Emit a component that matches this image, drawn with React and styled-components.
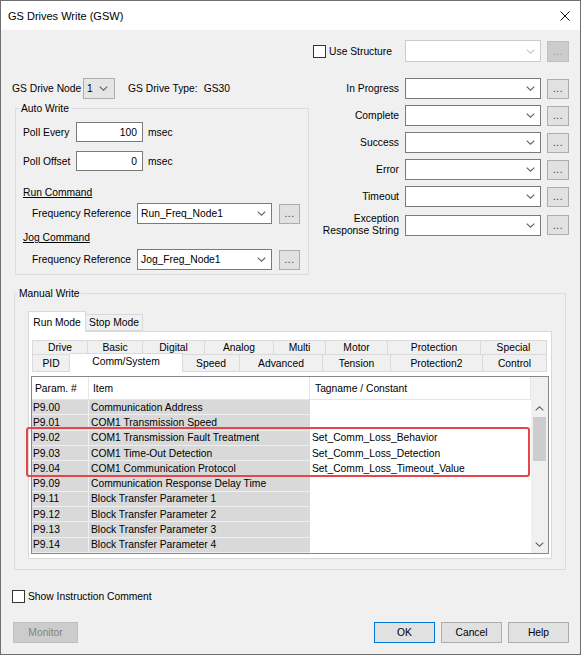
import React from 'react';
import styled, { createGlobalStyle, css } from 'styled-components';

const GlobalStyle = createGlobalStyle`
  html, body {
    margin: 0;
    padding: 0;
    background: #ffffff;
  }
  body {
    font-family: "Liberation Sans", Arial, sans-serif;
    font-size: 10.3px;
    color: #000;
  }
  * {
    box-sizing: border-box;
  }
`;

const rows = [
  { param: 'P9.00', item: 'Communication Address', tag: '' },
  { param: 'P9.01', item: 'COM1 Transmission Speed', tag: '' },
  { param: 'P9.02', item: 'COM1 Transmission Fault Treatment', tag: 'Set_Comm_Loss_Behavior' },
  { param: 'P9.03', item: 'COM1 Time-Out Detection', tag: 'Set_Comm_Loss_Detection' },
  { param: 'P9.04', item: 'COM1 Communication Protocol', tag: 'Set_Comm_Loss_Timeout_Value' },
  { param: 'P9.09', item: 'Communication Response Delay Time', tag: '' },
  { param: 'P9.11', item: 'Block Transfer Parameter 1', tag: '' },
  { param: 'P9.12', item: 'Block Transfer Parameter 2', tag: '' },
  { param: 'P9.13', item: 'Block Transfer Parameter 3', tag: '' },
  { param: 'P9.14', item: 'Block Transfer Parameter 4', tag: '' },
];

const topTabs = [
  ['Drive', 56], ['Basic', 55], ['Digital', 62], ['Analog', 69],
  ['Multi', 52], ['Motor', 62], ['Protection', 93], ['Special', 66],
];

const bottomTabs = [
  ['PID', 38], ['Comm/System', 113], ['Speed', 57], ['Advanced', 83],
  ['Tension', 68], ['Protection2', 92], ['Control', 64],
];

const statusRows = ['In Progress', 'Complete', 'Success', 'Error', 'Timeout'];

const Chevron = ({ up, color = '#606060' }) => (
  <svg width="9" height="5" viewBox="0 0 9 5">
    <path
      d={up ? 'M0.7 4.3 L4.5 0.8 L8.3 4.3' : 'M0.7 0.7 L4.5 4.2 L8.3 0.7'}
      fill="none"
      stroke={color}
      strokeWidth="1.1"
    />
  </svg>
);

const Window = styled.div`
  width: 581px;
  height: 655px;
  border: 1px solid #6f6f6f;
  background: #f0f0f0;
  display: flex;
  flex-direction: column;
  overflow: hidden;
`;

const TitleBar = styled.div`
  height: 29px;
  background: #fff;
  display: flex;
  align-items: center;
  justify-content: space-between;
  padding: 0 10px 0 7px;
  font-size: 11px;
`;

const Body = styled.div`
  flex: 1;
  display: flex;
  flex-direction: column;
  padding: 0 11px;
`;

const TopSection = styled.div`
  display: grid;
  grid-template-columns: 297px 1fr;
  column-gap: 1px;
  align-items: start;
`;

const LeftCol = styled.div`
  padding-top: 48px;
`;

const FieldRow = styled.div`
  display: flex;
  align-items: center;
  height: ${p => p.$h || 20}px;
  margin-top: ${p => p.$mt || 0}px;
  padding-left: ${p => p.$indent || 0}px;
`;

const Label = styled.span`
  width: ${p => (p.$w ? `${p.$w}px` : 'auto')};
  flex-shrink: 0;
  white-space: nowrap;
  margin-left: ${p => p.$ml || 0}px;
`;

const SectionLink = styled.span`
  text-decoration: underline;
  line-height: 13px;
`;

const Group = styled.fieldset`
  margin: ${p => p.$margin};
  padding: ${p => p.$padding};
  border: 1px solid #dcdcdc;
  min-width: 0;
`;

const GroupTitle = styled.legend`
  padding: 0 2px;
  margin-left: ${p => p.$ml}px;
  line-height: 13px;
`;

const TextInput = styled.div`
  width: 67px;
  height: 20px;
  background: #fff;
  border: 1px solid #7a7a7a;
  display: flex;
  align-items: center;
  justify-content: flex-end;
  padding-right: 5px;
`;

const ComboBox = styled.div`
  width: ${p => p.$w}px;
  height: ${p => p.$h || 21}px;
  flex-shrink: 0;
  background: ${p => (p.$flat ? '#e5e5e5' : '#fff')};
  border: 1px solid ${p => (p.$disabled ? '#cccccc' : p.$flat ? '#adadad' : '#7a7a7a')};
  display: flex;
  align-items: center;
  justify-content: space-between;
  padding: 0 ${p => (p.$flat ? 6 : 5)}px 0 3px;
  white-space: nowrap;
`;

const DotsButton = styled.div`
  width: ${p => p.$w || 22}px;
  height: ${p => p.$h || 20}px;
  flex-shrink: 0;
  margin-left: ${p => p.$ml || 0}px;
  background: ${p => (p.$disabled ? '#cccccc' : '#e1e1e1')};
  border: 1px solid ${p => (p.$disabled ? '#bfbfbf' : '#adadad')};
  color: ${p => (p.$disabled ? '#a0a0a0' : '#333')};
  display: flex;
  align-items: center;
  justify-content: center;
  font-size: 10px;
  letter-spacing: 0.5px;
`;

const Check = styled.span`
  width: 13px;
  height: 13px;
  flex-shrink: 0;
  background: #fff;
  border: 1px solid #333;
`;

const CheckLabel = styled.label`
  display: flex;
  align-items: center;
  gap: 3px;
  white-space: nowrap;
`;

const gridColumns = css`
  display: grid;
  grid-template-columns: 1fr 136px 22px;
  column-gap: 6px;
  align-items: center;
`;

const StructureRow = styled.div`
  ${gridColumns};
  height: 22px;
  margin-top: 10px;
  margin-bottom: 16px;

  ${CheckLabel} {
    justify-self: end;
    margin-right: 7px;
  }
`;

const StatusGrid = styled.div`
  ${gridColumns};
  row-gap: 6px;
`;

const StatusLabel = styled.span`
  text-align: right;
  line-height: 12px;
  white-space: nowrap;
`;

const TabStrip = styled.div`
  display: flex;
  align-items: flex-end;
  height: 20px;
`;

const PageTab = styled.div`
  width: ${p => p.$w}px;
  height: ${p => (p.$active ? 21 : 17)}px;
  margin-bottom: ${p => (p.$active ? -1 : 0)}px;
  margin-left: ${p => (p.$active ? 0 : -1)}px;
  background: ${p => (p.$active ? '#fff' : '#f0f0f0')};
  border: 1px solid #d9d9d9;
  border-bottom: ${p => (p.$active ? 'none' : '1px solid #d9d9d9')};
  display: flex;
  align-items: center;
  justify-content: center;
  position: relative;
  z-index: ${p => (p.$active ? 1 : 0)};
  &:first-child {
    margin-left: 0;
  }
`;

const TabPage = styled.div`
  background: #fff;
  border: 1px solid #d9d9d9;
  padding: 8px 2px 4px 2px;
`;

const InnerTabs = styled.div`
  margin: 0 2px 0 1px;
`;

const InnerTabRow = styled.div`
  display: flex;
  height: ${p => p.$h}px;
`;

const InnerTab = styled.div`
  width: ${p => p.$w}px;
  flex-shrink: 0;
  height: ${p => (p.$active ? p.$h + 2 : p.$h)}px;
  margin-top: ${p => (p.$active ? -2 : 0)}px;
  background: ${p => (p.$active ? '#fff' : '#f0f0f0')};
  border: 1px solid #dadada;
  border-top: ${p => (p.$lower && !p.$active ? 'none' : '1px solid #dadada')};
  border-left: ${p => (p.$first ? '1px solid #dadada' : 'none')};
  border-bottom: ${p => (p.$active ? 'none' : '1px solid #dadada')};
  display: flex;
  justify-content: center;
  align-items: ${p => (p.$active ? 'flex-start' : 'center')};
  padding-top: ${p => (p.$active ? 2 : 0)}px;
  position: relative;
  z-index: ${p => (p.$active ? 1 : 0)};
  white-space: nowrap;
`;

const Table = styled.div`
  position: relative;
  margin-top: 4px;
  height: 178px;
  border: 1px solid #828790;
  background: #fff;
  display: flex;
`;

const TableGrid = styled.div`
  flex: 1;
  display: grid;
  grid-template-columns: 57px 221px 1fr;
  grid-template-rows: 23px repeat(10, 1fr);
`;

const HeadCell = styled.div`
  display: flex;
  align-items: center;
  padding-left: ${p => p.$pad}px;
  border-right: 1px solid #e5e5e5;
  border-bottom: 1px solid #e5e5e5;
  white-space: nowrap;
`;

const Cell = styled.div`
  display: flex;
  align-items: center;
  padding-left: ${p => p.$pad}px;
  background: ${p => (p.$gray ? '#d9d9d9' : '#fff')};
  border-bottom: 1px solid ${p => (p.$gray ? '#efefef' : '#fff')};
  border-right: ${p => (p.$divider ? '1px solid #efefef' : 'none')};
  white-space: nowrap;
  overflow: hidden;
`;

const ScrollBar = styled.div`
  width: 17px;
  background: #f0f0f0;
  display: flex;
  flex-direction: column;
`;

const ScrollHead = styled.div`
  height: 23px;
`;

const ScrollArrow = styled.div`
  height: 17px;
  display: flex;
  align-items: center;
  justify-content: center;
`;

const ScrollTrack = styled.div`
  flex: 1;
`;

const ScrollThumb = styled.div`
  height: 44px;
  margin: 0 2px;
  background: #cdcdcd;
`;

const Highlight = styled.div`
  position: absolute;
  left: -6px;
  top: 50px;
  width: 504px;
  height: 50px;
  border: 2px solid #e8454a;
  border-radius: 3px;
  pointer-events: none;
`;

const CommentRow = styled.div`
  margin-top: 20px;
  height: 13px;
  display: flex;
  align-items: center;
`;

const ButtonRow = styled.div`
  margin-top: 19px;
  display: flex;
  align-items: center;
  gap: 6px;
`;

const DialogButton = styled.div`
  width: ${p => p.$w || 61}px;
  height: 21px;
  display: flex;
  align-items: center;
  justify-content: center;
  background: ${p => (p.$disabled ? '#cccccc' : '#e1e1e1')};
  border: 1px solid ${p => (p.$default ? '#0078d7' : p.$disabled ? '#bfbfbf' : '#adadad')};
  color: ${p => (p.$disabled ? '#838383' : '#000')};
  margin-left: ${p => p.$ml || 0};
`;

const Spacer = styled.span`
  flex: 1;
`;

const App = () => {
  return (
    <>
      <GlobalStyle />
      <Window>
        <TitleBar>
          <span>GS Drives Write (GSW)</span>
          <svg width="10" height="10" viewBox="0 0 10 10">
            <path d="M0.5 0.5 L9.5 9.5 M9.5 0.5 L0.5 9.5" stroke="#111" strokeWidth="1" />
          </svg>
        </TitleBar>
        <Body>
          <TopSection>
            <LeftCol>
              <FieldRow $h={21}>
                <Label $w={71}>GS Drive Node</Label>
                <ComboBox $w={32} $flat>
                  <span>1</span>
                  <Chevron />
                </ComboBox>
                <Label $ml={13}>GS Drive Type:</Label>
                <Label $ml={6}>GS30</Label>
              </FieldRow>
              <Group $margin="3px 0 0 3px" $padding="7px 7px 4px 7px">
                <GroupTitle $ml={-4}>Auto Write</GroupTitle>
                <FieldRow>
                  <Label $w={53}>Poll Every</Label>
                  <TextInput>100</TextInput>
                  <Label $ml={5}>msec</Label>
                </FieldRow>
                <FieldRow $mt={9}>
                  <Label $w={53}>Poll Offset</Label>
                  <TextInput>0</TextInput>
                  <Label $ml={5}>msec</Label>
                </FieldRow>
                <FieldRow $mt={15} $h={13}>
                  <SectionLink>Run Command</SectionLink>
                </FieldRow>
                <FieldRow $mt={4} $h={21} $indent={9}>
                  <Label $w={105}>Frequency Reference</Label>
                  <ComboBox $w={135}>
                    <span>Run_Freq_Node1</span>
                    <Chevron />
                  </ComboBox>
                  <DotsButton $ml={7} $w={21}>...</DotsButton>
                </FieldRow>
                <FieldRow $mt={7} $h={13}>
                  <SectionLink>Jog Command</SectionLink>
                </FieldRow>
                <FieldRow $mt={5} $h={21} $indent={9}>
                  <Label $w={105}>Frequency Reference</Label>
                  <ComboBox $w={135}>
                    <span>Jog_Freg_Node1</span>
                    <Chevron />
                  </ComboBox>
                  <DotsButton $ml={7} $w={21}>...</DotsButton>
                </FieldRow>
              </Group>
            </LeftCol>

            <div>
              <StructureRow>
                <CheckLabel>
                  <Check />
                  Use Structure
                </CheckLabel>
                <ComboBox $w={136} $h={22} $disabled>
                  <span />
                  <Chevron color="#c4c4c4" />
                </ComboBox>
                <DotsButton $h={21} $disabled>...</DotsButton>
              </StructureRow>
              <StatusGrid>
                {statusRows.map(name => (
                  <React.Fragment key={name}>
                    <StatusLabel>{name}</StatusLabel>
                    <ComboBox $w={136}>
                      <span />
                      <Chevron />
                    </ComboBox>
                    <DotsButton>...</DotsButton>
                  </React.Fragment>
                ))}
                <StatusLabel>
                  Exception
                  <br />
                  Response String
                </StatusLabel>
                <ComboBox $w={136}>
                  <span />
                  <Chevron />
                </ComboBox>
                <DotsButton>...</DotsButton>
              </StatusGrid>
            </div>
          </TopSection>

          <Group $margin="12px 3px 0 2px" $padding="11px 13px 10px 13px">
            <GroupTitle $ml={-11}>Manual Write</GroupTitle>
            <TabStrip>
              <PageTab $w={58} $active>Run Mode</PageTab>
              <PageTab $w={58}>Stop Mode</PageTab>
            </TabStrip>
            <TabPage>
              <InnerTabs>
                <InnerTabRow $h={15}>
                  {topTabs.map(([name, w], i) => (
                    <InnerTab key={name} $w={w} $h={15} $first={i === 0}>
                      {name}
                    </InnerTab>
                  ))}
                </InnerTabRow>
                <InnerTabRow $h={17}>
                  {bottomTabs.map(([name, w], i) => (
                    <InnerTab
                      key={name}
                      $w={w}
                      $h={17}
                      $lower
                      $first={i === 0}
                      $active={name === 'Comm/System'}
                    >
                      {name}
                    </InnerTab>
                  ))}
                </InnerTabRow>
              </InnerTabs>
              <Table>
                <TableGrid>
                  <HeadCell $pad={3}>Param. #</HeadCell>
                  <HeadCell $pad={4}>Item</HeadCell>
                  <HeadCell $pad={5}>Tagname / Constant</HeadCell>
                  {rows.map(r => (
                    <React.Fragment key={r.param}>
                      <Cell $pad={1} $gray $divider>{r.param}</Cell>
                      <Cell $pad={2} $gray>{r.item}</Cell>
                      <Cell $pad={2}>{r.tag}</Cell>
                    </React.Fragment>
                  ))}
                </TableGrid>
                <ScrollBar>
                  <ScrollHead />
                  <ScrollArrow>
                    <Chevron up />
                  </ScrollArrow>
                  <ScrollTrack>
                    <ScrollThumb />
                  </ScrollTrack>
                  <ScrollArrow>
                    <Chevron />
                  </ScrollArrow>
                </ScrollBar>
                <Highlight />
              </Table>
            </TabPage>
          </Group>

          <CommentRow>
            <CheckLabel>
              <Check />
              Show Instruction Comment
            </CheckLabel>
          </CommentRow>

          <ButtonRow>
            <DialogButton $w={65} $disabled $ml="1px">Monitor</DialogButton>
            <Spacer />
            <DialogButton $default>OK</DialogButton>
            <DialogButton>Cancel</DialogButton>
            <DialogButton>Help</DialogButton>
          </ButtonRow>
        </Body>
      </Window>
    </>
  );
};

export default App;
